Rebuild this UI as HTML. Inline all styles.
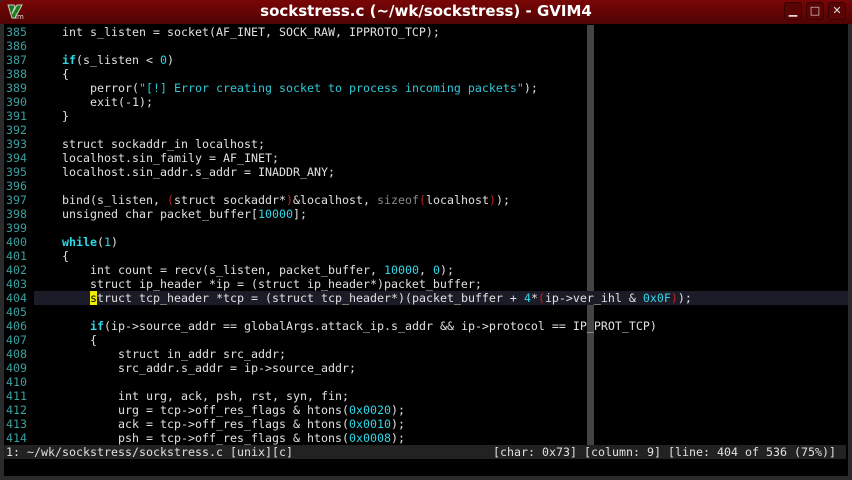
<!DOCTYPE html>
<html><head><meta charset="utf-8"><style>
html,body{margin:0;padding:0;width:852px;height:480px;overflow:hidden;background:#2b2b2b}
#title{position:absolute;left:0;top:0;width:852px;height:24px;background:linear-gradient(#7a0606,#4f0303);border-radius:4px 4px 0 0}
#title .t{position:absolute;left:0;right:0;top:2px;text-align:center;color:#fff;font:bold 15px "DejaVu Sans","Liberation Sans",sans-serif}
.btn{position:absolute;top:2px;width:16px;height:16px;border:1px solid #3a0000;border-radius:3px;background:#5a0404;color:#ddd;font:bold 11px "DejaVu Sans",sans-serif;text-align:center;line-height:16px}
#ed{position:absolute;left:4px;top:24px;width:844px;height:452px;background:#000}
#cc{position:absolute;left:583px;top:1px;width:7px;height:420px;background:#444}
#cl{position:absolute;left:30px;top:267px;width:814px;height:14px;background:#1c1c28}
.l{position:absolute;left:2px;height:14px;line-height:14px;white-space:pre;font:11.63px "DejaVu Sans Mono","Liberation Mono",monospace;color:#e0e0e0}
.n{color:#3aa0a0}.k{color:#2fd8e8;font-weight:bold}.c{color:#2fd8e8}.s{color:#2fc8d8}.p{color:#cc2020}.g{color:#888}
#st{position:absolute;left:0;top:421px;width:842px;height:14px;background:#222;line-height:14px;white-space:pre;font:11.63px "DejaVu Sans Mono","Liberation Mono",monospace;color:#e0e0e0}
#st .a{position:absolute;left:2px}#st .b{position:absolute;right:10px}
.cur{background:#ee0;color:#000}
</style></head><body>
<div id="title"><svg style="position:absolute;left:6px;top:3px" width="18" height="18" viewBox="0 0 18 18"><path d="M2 2h6l1 1-3 8 5-9h5l-7 13H6z" fill="#1a7a1a" stroke="#ccc" stroke-width="1"/><text x="9" y="16" font-size="7" fill="#ddd" font-family="DejaVu Sans">im</text></svg><div class="t">sockstress.c (~/wk/sockstress) - GVIM4</div>
<div class="btn" style="left:784px">▁</div><div class="btn" style="left:806px">□</div><div class="btn" style="left:828px">✕</div></div>
<div id="ed"><div id="cc"></div><div id="cl"></div>
<div class="l" style="top:1px"><span class="n">385 </span>    int s_listen = socket(AF_INET, SOCK_RAW, IPPROTO_TCP);</div>
<div class="l" style="top:15px"><span class="n">386 </span></div>
<div class="l" style="top:29px"><span class="n">387 </span>    <span class="k">if</span>(s_listen &lt; <span class="c">0</span>)</div>
<div class="l" style="top:43px"><span class="n">388 </span>    {</div>
<div class="l" style="top:57px"><span class="n">389 </span>        perror(<span class="s">"[!] Error creating socket to process incoming packets"</span>);</div>
<div class="l" style="top:71px"><span class="n">390 </span>        exit(-1);</div>
<div class="l" style="top:85px"><span class="n">391 </span>    }</div>
<div class="l" style="top:99px"><span class="n">392 </span></div>
<div class="l" style="top:113px"><span class="n">393 </span>    struct sockaddr_in localhost;</div>
<div class="l" style="top:127px"><span class="n">394 </span>    localhost.sin_family = AF_INET;</div>
<div class="l" style="top:141px"><span class="n">395 </span>    localhost.sin_addr.s_addr = INADDR_ANY;</div>
<div class="l" style="top:155px"><span class="n">396 </span></div>
<div class="l" style="top:169px"><span class="n">397 </span>    bind(s_listen, <span class="p">(</span>struct sockaddr*<span class="p">)</span>&amp;localhost, <span class="g">sizeof</span><span class="p">(</span>localhost<span class="p">)</span>);</div>
<div class="l" style="top:183px"><span class="n">398 </span>    unsigned char packet_buffer[<span class="c">10000</span>];</div>
<div class="l" style="top:197px"><span class="n">399 </span></div>
<div class="l" style="top:211px"><span class="n">400 </span>    <span class="k">while</span>(<span class="c">1</span>)</div>
<div class="l" style="top:225px"><span class="n">401 </span>    {</div>
<div class="l" style="top:239px"><span class="n">402 </span>        int count = recv(s_listen, packet_buffer, <span class="c">10000</span>, <span class="c">0</span>);</div>
<div class="l" style="top:253px"><span class="n">403 </span>        struct ip_header *ip = (struct ip_header*)packet_buffer;</div>
<div class="l" style="top:267px"><span class="n">404 </span>        <span class="cur">s</span>truct tcp_header *tcp = (struct tcp_header*)(packet_buffer + <span class="c">4</span>*<span class="p">(</span>ip-&gt;ver_ihl &amp; <span class="c">0x0F</span><span class="p">)</span>);</div>
<div class="l" style="top:281px"><span class="n">405 </span></div>
<div class="l" style="top:295px"><span class="n">406 </span>        <span class="k">if</span>(ip-&gt;source_addr == globalArgs.attack_ip.s_addr &amp;&amp; ip-&gt;protocol == IP_PROT_TCP)</div>
<div class="l" style="top:309px"><span class="n">407 </span>        {</div>
<div class="l" style="top:323px"><span class="n">408 </span>            struct in_addr src_addr;</div>
<div class="l" style="top:337px"><span class="n">409 </span>            src_addr.s_addr = ip-&gt;source_addr;</div>
<div class="l" style="top:351px"><span class="n">410 </span></div>
<div class="l" style="top:365px"><span class="n">411 </span>            int urg, ack, psh, rst, syn, fin;</div>
<div class="l" style="top:379px"><span class="n">412 </span>            urg = tcp-&gt;off_res_flags &amp; htons(<span class="c">0x0020</span>);</div>
<div class="l" style="top:393px"><span class="n">413 </span>            ack = tcp-&gt;off_res_flags &amp; htons(<span class="c">0x0010</span>);</div>
<div class="l" style="top:407px"><span class="n">414 </span>            psh = tcp-&gt;off_res_flags &amp; htons(<span class="c">0x0008</span>);</div>
<div id="st"><span class="a">1: ~/wk/sockstress/sockstress.c [unix][c]</span><span class="b">[char: 0x73] [column: 9] [line: 404 of 536 (75%)]</span></div>
</div>
</body></html>
